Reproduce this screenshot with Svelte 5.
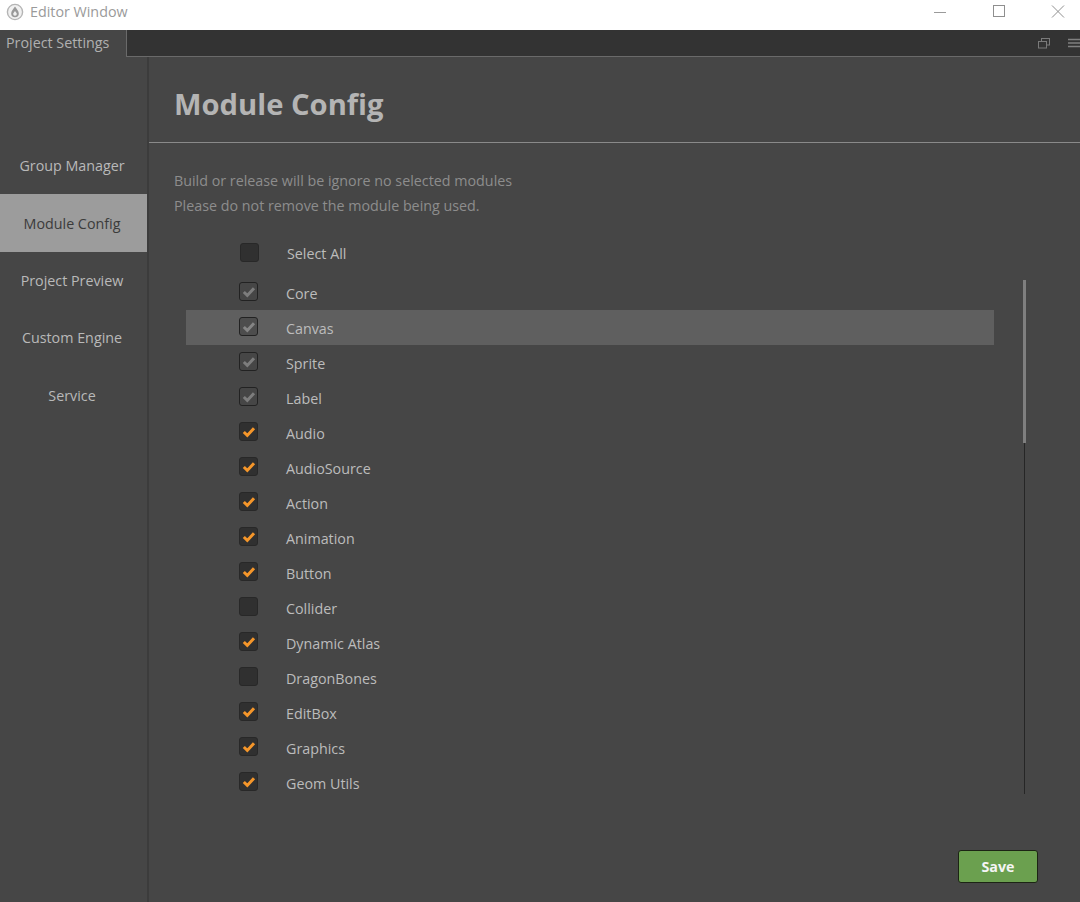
<script>
  const nav = ['Group Manager', 'Module Config', 'Project Preview', 'Custom Engine', 'Service'];
  const modules = [
    ['Core', 'locked'], ['Canvas', 'locked'], ['Sprite', 'locked'], ['Label', 'locked'],
    ['Audio', 'on'], ['AudioSource', 'on'], ['Action', 'on'], ['Animation', 'on'], ['Button', 'on'],
    ['Collider', 'off'], ['Dynamic Atlas', 'on'], ['DragonBones', 'off'], ['EditBox', 'on'],
    ['Graphics', 'on'], ['Geom Utils', 'on']
  ];
</script>

<div class="window">
  <header class="titlebar">
    <svg class="logo" width="18" height="18" viewBox="0 0 18 18">
      <circle cx="9" cy="9" r="7.6" fill="#f1f1f1" stroke="#b5b5b5" stroke-width="1.4"/>
      <path d="M9 3.5C7 6.5 5.2 8 5.2 10.4a3.8 3.8 0 0 0 7.6 0C12.8 8 11 6.5 9 3.5Z" fill="#999"/>
      <path d="M9 8C8 9.4 7.2 10 7.2 11a1.8 1.8 0 0 0 3.6 0C10.800 10 10 9.400 9 8Z" fill="#f1f1f1"/>
    </svg>
    <span class="wintitle">Editor Window</span>
    <div class="winbtns">
      <svg width="14" height="14" viewBox="0 0 14 14"><path d="M1 7.500H13" stroke="#9a9a9a" stroke-width="1"/></svg>
      <svg width="14" height="14" viewBox="0 0 14 14"><rect x="1.500" y="0.500" width="11" height="11" fill="none" stroke="#8f8f8f"/></svg>
      <svg width="14" height="14" viewBox="0 0 14 14"><path d="M1 0.500L13 12.500M13 0.500L1 12.500" stroke="#8f8f8f" stroke-width="1"/></svg>
    </div>
  </header>

  <div class="tabbar">
    <div class="tab">Project Settings</div>
    <div class="tabicons">
      <svg width="12" height="11" viewBox="0 0 12 11">
        <rect x="3.500" y="0.500" width="8" height="6.500" fill="none" stroke="#7a7a7a"/>
        <rect x="0.500" y="3.500" width="8" height="6.500" fill="#333" stroke="#7a7a7a"/>
      </svg>
      <svg width="12" height="10" viewBox="0 0 12 10"><path d="M0 1.500H12M0 5H12M0 8.500H12" stroke="#808080" stroke-width="1.600"/></svg>
    </div>
  </div>

  <div class="body">
    <nav class="sidebar">
      {#each nav as item, i}
        <div class="navitem" class:active={i === 1}>{item}</div>
      {/each}
    </nav>

    <main class="content">
      <h1>Module Config</h1>
      <div class="desc">
        <p>Build or release will be ignore no selected modules</p>
        <p>Please do not remove the module being used.</p>
      </div>

      <div class="selectall">
        <span class="box"></span>
        <span>Select All</span>
      </div>

      <div class="listwrap">
        <div class="list">
          {#each modules as [name, state], i}
            <div class="row" class:hover={i === 1}>
              <span class="box {state}">
                {#if state !== 'off'}
                  <svg width="14" height="12" viewBox="0 0 14 12"><path d="M1.800 6L5.300 9.400L12 2.200" fill="none" stroke="currentColor" stroke-width="3"/></svg>
                {/if}
              </span>
              <span class="label">{name}</span>
            </div>
          {/each}
        </div>
        <div class="scrolltrack"><div class="scrollthumb"></div></div>
      </div>

      <div class="footer"><button class="save">Save</button></div>
    </main>
  </div>
</div>

<style>
  :global(body) { margin: 0; background: #464646; }
  .window {
    width: 1080px; height: 902px; display: flex; flex-direction: column; overflow: hidden;
    background: #464646; color: #b8b8b8;
    font-family: "Open Sans", "Noto Sans", sans-serif; font-size: 14.3px;
  }
  .titlebar {
    height: 30px; flex: none; background: #fff; display: flex; align-items: center;
    padding-left: 6px; box-sizing: border-box;
  }
  .wintitle { margin-left: 6px; color: #9a9a9a; margin-top: -7px; }
  .logo { margin-top: -6px; }
  .winbtns { margin-left: auto; display: flex; gap: 45px; margin-right: 15px; margin-bottom: 6px; }
  .tabbar {
    height: 27px; flex: none; background: #333; border-bottom: 1px solid #6a6a6a;
    box-sizing: border-box; display: flex; align-items: stretch; position: relative;
  }
  .tab {
    width: 127px; box-sizing: border-box; background: #464646; color: #b0b0b0;
    padding: 3px 0 0 6px; border-right: 1px solid #6a6a6a; margin-bottom: -1px;
  }
  .tabicons { margin-left: auto; display: flex; align-items: center; gap: 18px; }
  .body { flex: 1; display: flex; min-height: 0; }
  .sidebar {
    width: 149px; flex: none; box-sizing: border-box; padding-top: 79.500px;
    border-right: 2px solid #3c3c3c; background: #464646;
  }
  .navitem {
    height: 57.500px; width: 147px; box-sizing: border-box; padding-right: 3px;
    display: flex; align-items: center; justify-content: center; color: #b9b9b9;
  }
  .navitem.active { background: #9c9c9c; color: #3b3b3b; padding-top: 1px; }
  .content { flex: 1; position: relative; display: flex; flex-direction: column; }
  h1 {
    margin: 0; height: 86px; box-sizing: border-box; border-bottom: 1px solid #8a8a8a;
    padding: 27px 0 0 25px; font-size: 29.200px; line-height: 40px; font-weight: 700; color: #b4b4b4;
  }
  .desc { margin-top: 25px; padding-left: 25px; color: #8d8d8d; line-height: 25px; }
  .desc p { margin: 0; }
  .selectall {
    margin-top: 22px; padding-left: 91px; display: flex; align-items: center; gap: 28px;
    height: 26px; color: #bcbcbc;
  }
  .selectall .box { margin-top: -2px; background: #303030; }
  .listwrap { position: relative; margin-top: 9px; padding-left: 37px; width: 843px; height: 525px; }
  .list { width: 808px; }
  .row { height: 35px; display: flex; align-items: center; gap: 28px; padding-left: 53px; box-sizing: border-box; color: #bcbcbc; }
  .row.hover { background: #5f5f5f; }
  .label { position: relative; top: 1px; }
  .box {
    width: 19px; height: 19px; box-sizing: border-box; flex: none; border-radius: 3px;
    background: #303030; border: 1px solid #282828; display: flex; align-items: center; justify-content: center;
    margin-top: -2px;
  }
  .box.on { color: #f5962a; }
  .box.locked { background: #464646; border-color: #222; color: #7d7d7d; }
  .hover .box.locked { background: #4d4d4d; color: #858585; }
  .scrolltrack { position: absolute; left: 874px; top: 5px; width: 3px; height: 514px; }
  .scrolltrack::before { content: ""; position: absolute; left: 1px; top: 0; width: 1px; height: 100%; background: #262626; }
  .scrollthumb { position: relative; width: 3px; height: 163px; background: #7f7f7f; }
  .footer { position: absolute; right: 42px; top: 793px; }
  .save {
    width: 80px; height: 33px; box-sizing: border-box; border-radius: 3px; border: 1px solid #1c2414;
    background: #6ba04f; color: #f4f4f4; font: 700 14.3px "Open Sans", sans-serif; padding: 0;
  }
</style>
